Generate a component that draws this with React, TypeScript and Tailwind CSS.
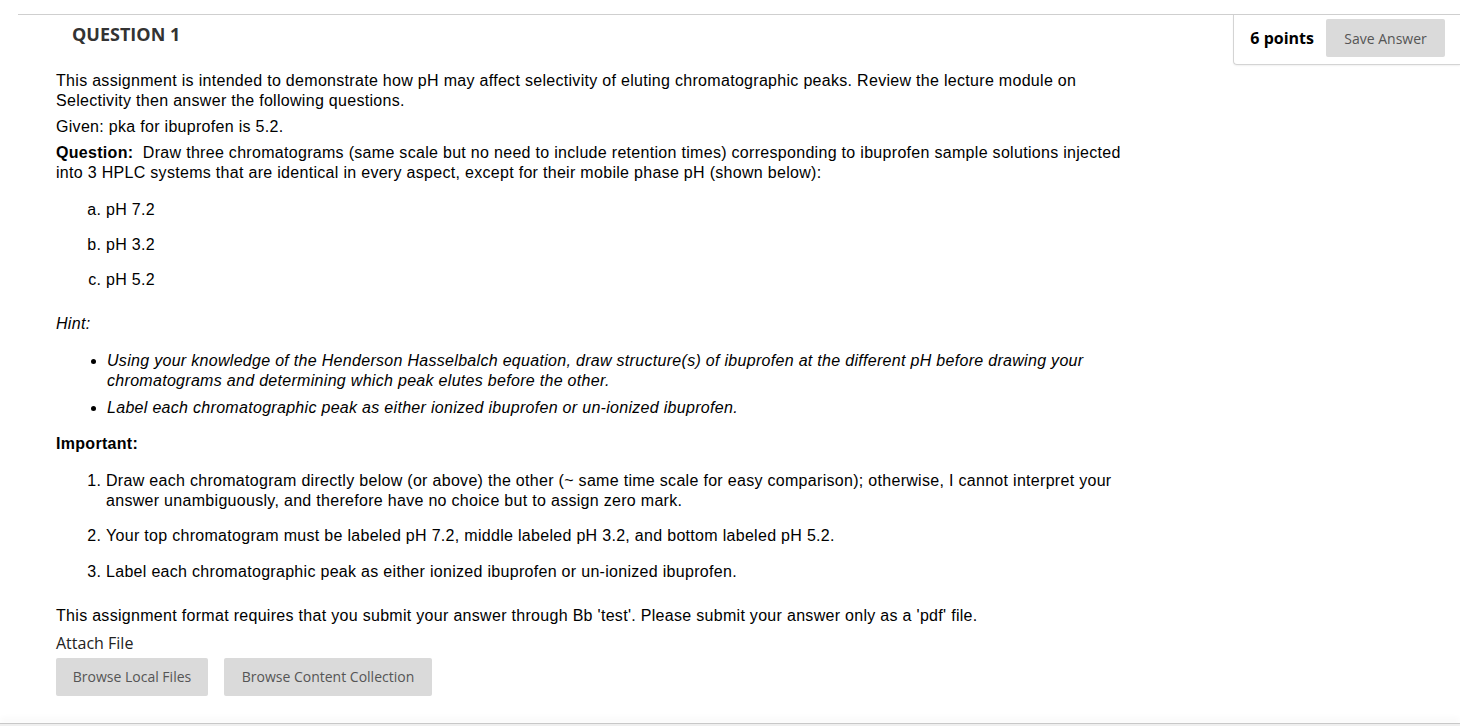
import React from 'react'

const body = { fontFamily: '"Liberation Sans", Arial, sans-serif' }
const open = { fontFamily: '"Open Sans", "Noto Sans", sans-serif' }

export default function App() {
  return (
    <div className="relative h-[726px] w-full overflow-hidden bg-white text-black">
      <div className="ml-[18px] pt-[14px]">
        <div className="flex items-start justify-between border-t border-[#cfcfcf]">
          <h2
            className="pl-[54px] pt-[8px] text-[18px] font-bold leading-[22px] text-[#333]"
            style={open}
          >
            QUESTION 1
          </h2>
          <div className="flex items-center gap-[12px] rounded-bl-[4px] border-b border-l border-[#d4d4d4] pb-[7px] pl-[16px] pr-[15px] pt-[4px] shadow-[0_1px_2px_rgba(0,0,0,0.06)]">
            <span className="text-[16px] font-bold leading-[20px] text-black" style={open}>
              6 points
            </span>
            <button
              className="h-[38px] w-[119px] rounded-[2px] bg-[#dadada] text-[14px] text-[#555]"
              style={open}
            >
              Save Answer
            </button>
          </div>
        </div>

        <div className="mt-[6px] w-[1130px] pl-[38px] text-[16px] leading-[20px] tracking-[0.3px]" style={body}>
          <p>
            This assignment is intended to demonstrate how pH may affect selectivity of eluting chromatographic peaks. Review the lecture module on Selectivity then answer the following questions.
          </p>
          <p className="mt-[6px]">Given: pka for ibuprofen is 5.2.</p>
          <p className="mt-[6px]">
            <strong>Question:</strong>&nbsp; Draw three chromatograms (same scale but no need to include retention times) corresponding to ibuprofen sample solutions injected into 3 HPLC systems that are identical in every aspect, except for their mobile phase pH (shown below):
          </p>
          <ol className="mt-[17px] list-[lower-alpha] pl-[50px]">
            <li>pH 7.2</li>
            <li className="mt-[15px]">pH 3.2</li>
            <li className="mt-[15px]">pH 5.2</li>
          </ol>
          <p className="mt-[24px] italic">Hint:</p>
          <ul className="mt-[17px] list-disc pl-[51px] italic">
            <li>
              Using your knowledge of the Henderson Hasselbalch equation, draw structure(s) of ibuprofen at the different pH before drawing your chromatograms and determining which peak elutes before the other.
            </li>
            <li className="mt-[7px]">Label each chromatographic peak as either ionized ibuprofen or un-ionized ibuprofen.</li>
          </ul>
          <p className="mt-[16px] font-bold">Important:</p>
          <ol className="mt-[17px] list-decimal pl-[50px]">
            <li>
              Draw each chromatogram directly below (or above) the other (~ same time scale for easy comparison); otherwise, I cannot interpret your answer unambiguously, and therefore have no choice but to assign zero mark.
            </li>
            <li className="mt-[15px]">Your top chromatogram must be labeled pH 7.2, middle labeled pH 3.2, and bottom labeled pH 5.2.</li>
            <li className="mt-[16px]">Label each chromatographic peak as either ionized ibuprofen or un-ionized ibuprofen.</li>
          </ol>
          <p className="mt-[24px]">
            This assignment format requires that you submit your answer through Bb 'test'. Please submit your answer only as a 'pdf' file.
          </p>
          <p className="mt-[5px] text-[16px] leading-[24px] tracking-normal text-[#222]" style={open}>
            Attach File
          </p>
          <div className="mt-[3px] flex gap-[16px] tracking-normal">
            <button className="h-[38px] w-[152px] rounded-[2px] bg-[#dadada] text-[14px] text-[#555]" style={open}>
              Browse Local Files
            </button>
            <button className="h-[38px] w-[208px] rounded-[2px] bg-[#dadada] text-[14px] text-[#555]" style={open}>
              Browse Content Collection
            </button>
          </div>
        </div>
      </div>
      <div className="absolute bottom-0 left-0 right-0 h-[3px] border-t border-[#c8c8c8] bg-[#efefef] shadow-[0_-4px_6px_rgba(0,0,0,0.05)]" />
    </div>
  )
}
